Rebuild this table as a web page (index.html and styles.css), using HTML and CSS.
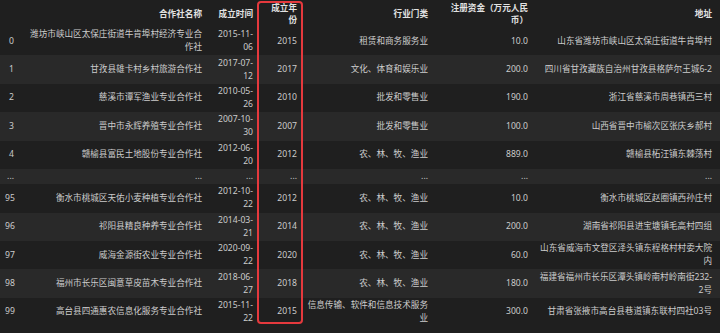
FILE: index.html
```html
<!DOCTYPE html>
<html lang="zh">
<head>
<meta charset="utf-8">
<title>合作社</title>
<link rel="stylesheet" href="styles.css">
</head>
<body>
<div class="frame">
  <table class="df">
    <colgroup>
      <col class="c-idx"><col class="c-name"><col class="c-date"><col class="c-year"><col class="c-ind"><col class="c-cap"><col class="c-addr">
    </colgroup>
    <thead>
      <tr>
        <th></th>
        <th>合作社名称</th>
        <th>成立时间</th>
        <th>成立年份</th>
        <th>行业门类</th>
        <th>注册资金（万元人民币）</th>
        <th>地址</th>
      </tr>
    </thead>
    <tbody>
      <tr><th>0</th><td>潍坊市峡山区太保庄街道牛肯埠村经济专业合作社</td><td>2015-11-<wbr>06</td><td>2015</td><td>租赁和商务服务业</td><td>10.0</td><td>山东省潍坊市峡山区太保庄街道牛肯埠村</td></tr>
      <tr><th>1</th><td>甘孜县雄卡村乡村旅游合作社</td><td>2017-07-<wbr>12</td><td>2017</td><td>文化、体育和娱乐业</td><td>200.0</td><td>四川省甘孜藏族自治州甘孜县格萨尔王城6-2</td></tr>
      <tr><th>2</th><td>慈溪市谭军渔业专业合作社</td><td>2010-05-<wbr>26</td><td>2010</td><td>批发和零售业</td><td>190.0</td><td>浙江省慈溪市周巷镇西三村</td></tr>
      <tr><th>3</th><td>晋中市永辉养殖专业合作社</td><td>2007-10-<wbr>30</td><td>2007</td><td>批发和零售业</td><td>100.0</td><td>山西省晋中市榆次区张庆乡郝村</td></tr>
      <tr><th>4</th><td>赣榆县富民土地股份专业合作社</td><td>2012-06-<wbr>20</td><td>2012</td><td>农、林、牧、渔业</td><td>889.0</td><td>赣榆县柘汪镇东棘荡村</td></tr>
      <tr><th>...</th><td>...</td><td>...</td><td>...</td><td>...</td><td>...</td><td>...</td></tr>
      <tr><th>95</th><td>衡水市桃城区天佑小麦种植专业合作社</td><td>2012-10-<wbr>22</td><td>2012</td><td>农、林、牧、渔业</td><td>10.0</td><td>衡水市桃城区赵圈镇西孙庄村</td></tr>
      <tr><th>96</th><td>祁阳县精良种养专业合作社</td><td>2014-03-<wbr>21</td><td>2014</td><td>农、林、牧、渔业</td><td>200.0</td><td>湖南省祁阳县进宝塘镇毛高村四组</td></tr>
      <tr><th>97</th><td>威海金源街农业专业合作社</td><td>2020-09-<wbr>22</td><td>2020</td><td>农、林、牧、渔业</td><td>60.0</td><td>山东省威海市文登区泽头镇东程格村村委大院内</td></tr>
      <tr><th>98</th><td>福州市长乐区闽意草皮苗木专业合作社</td><td>2018-06-<wbr>27</td><td>2018</td><td>农、林、牧、渔业</td><td>180.0</td><td>福建省福州市长乐区潭头镇岭南村岭南街232-<wbr>2号</td></tr>
      <tr><th>99</th><td>高台县四通惠农信息化服务专业合作社</td><td>2015-11-<wbr>22</td><td>2015</td><td>信息传输、软件和信息技术服务业</td><td>300.0</td><td>甘肃省张掖市高台县巷道镇东联村四社03号</td></tr>
    </tbody>
  </table>
  <div class="highlight"></div>
</div>
</body>
</html>
```

FILE: styles.css
```css
html, body {
  margin: 0;
  background: #1f1f1f;
}

body {
  font-family: "Noto Sans", "Noto Sans CJK SC", sans-serif;
  font-size: 8.6px;
  color: #cccccc;
}

.frame {
  position: relative;
  width: 720px;
}

.df {
  width: 720px;
  table-layout: fixed;
  border-collapse: collapse;
  border-spacing: 0;
}

.c-idx { width: 19px; }
.c-name { width: 188px; }
.c-date { width: 51px; }
.c-year { width: 44px; }
.c-ind { width: 131px; }
.c-cap { width: 100px; }
.c-addr { width: 187px; }

.df th,
.df td {
  padding: 1.2px 5px;
  text-align: right;
  vertical-align: middle;
  line-height: 13px;
  font-weight: normal;
  overflow: visible;
}

.df thead th {
  font-weight: bold;
  line-height: 12px;
  height: 24px;
  padding-top: 1.5px;
  padding-bottom: 1.5px;
  color: #e2e2e2;
}

.df tbody tr:nth-child(even) {
  background: #292929;
}

.df th:nth-child(4),
.df td:nth-child(4) {
  padding-left: 12px;
}

.df th:nth-child(5),
.df td:nth-child(5) {
  padding-left: 1px;
}

.df th:nth-child(6),
.df td:nth-child(6) {
  padding-left: 15px;
}

.df th:nth-child(7),
.df td:nth-child(7) {
  padding-right: 8px;
}

.highlight {
  position: absolute;
  left: 257px;
  top: 1px;
  width: 46px;
  height: 323px;
  box-sizing: border-box;
  border: 2px solid #e5393d;
  border-radius: 4px;
  pointer-events: none;
}
```
